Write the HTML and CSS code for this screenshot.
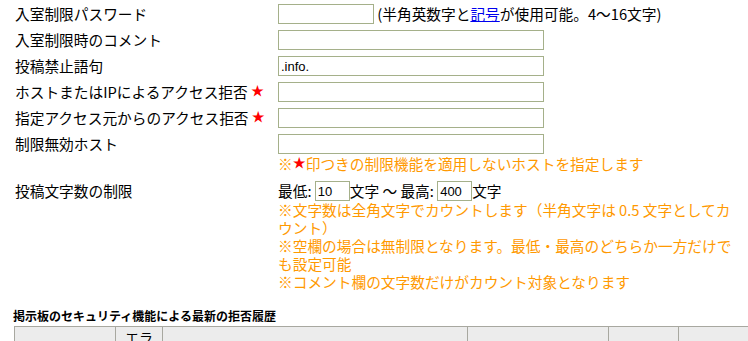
FILE: index.html
```html
<!DOCTYPE html>
<html lang="ja">

<head>
  <meta charset="UTF-8">
  <meta name="viewport" content="width=device-width, initial-scale=1.0">
  <title>セキュリティ設定</title>
  <link rel="stylesheet" href="styles.css">
</head>

<body>
  <div class="settings">
    <div class="label">入室制限パスワード</div>
    <div class="value">
      <input type="text" class="short"> (半角英数字と<a href="#">記号</a>が使用可能。4〜16文字)
    </div>

    <div class="label">入室制限時のコメント</div>
    <div class="value"><input type="text" class="long"></div>

    <div class="label">投稿禁止語句</div>
    <div class="value"><input type="text" class="long" value=".info."></div>

    <div class="label">ホストまたはIPによるアクセス拒否 <span class="star">★</span></div>
    <div class="value"><input type="text" class="long"></div>

    <div class="label">指定アクセス元からのアクセス拒否 <span class="star">★</span></div>
    <div class="value"><input type="text" class="long"></div>

    <div class="label">制限無効ホスト</div>
    <div class="value">
      <input type="text" class="long">
      <div class="note host-note">※<span class="star">★</span>印つきの制限機能を適用しないホストを指定します</div>
    </div>

    <div class="label">投稿文字数の制限</div>
    <div class="value">
      <div class="range">
        最低: <input type="text" class="num" value="10">文字 〜 最高: <input type="text" class="num" value="400">文字
      </div>
      <div class="note">※文字数は全角文字でカウントします（半角文字は 0.5 文字としてカウント）</div>
      <div class="note">※空欄の場合は無制限となります。最低・最高のどちらか一方だけでも設定可能</div>
      <div class="note">※コメント欄の文字数だけがカウント対象となります</div>
    </div>
  </div>

  <h2 class="history-title">掲示板のセキュリティ機能による最新の拒否履歴</h2>
  <table class="history">
    <tr>
      <th class="c1"></th>
      <th class="c2">エラー</th>
      <th class="c3"></th>
      <th class="c4"></th>
      <th class="c5"></th>
      <th class="c6"></th>
    </tr>
  </table>
</body>

</html>
```

FILE: styles.css
```css
html {
  overflow: hidden;
}

body {
  font-family: "Noto Sans CJK JP", "Liberation Sans", sans-serif;
  font-size: 14.7px;
  color: #000;
  background-color: #fff;
  margin: 0;
  padding: 4px 0 0 15px;
}

.settings {
  display: grid;
  grid-template-columns: 263px 462px;
  grid-auto-rows: min-content;
  row-gap: 6px;
}

.label {
  line-height: 20px;
  height: 20px;
  white-space: nowrap;
}

.value {
  line-height: 20px;
  min-height: 20px;
}

.star {
  color: #ff0000;
  font-size: 13px;
  line-height: 0;
  vertical-align: 3px;
}

input {
  font-family: "Liberation Sans", Arial, sans-serif;
  font-size: 13px;
  height: 20px;
  box-sizing: border-box;
  border: 1px solid #a5b08a;
  padding: 0 2px;
  margin: 0;
  vertical-align: top;
  background-color: #fff;
}

.value > input.long {
  display: block;
}

input.short {
  width: 96px;
}

input.long {
  width: 266px;
}

input.num {
  width: 35px;
}

a {
  color: #0000ee;
}

.note {
  color: #ff9900;
  line-height: 18px;
}

.host-note {
  margin-top: 1px;
  margin-bottom: 2px;
}

.range {
  line-height: 20px;
  height: 20px;
}

.history-title {
  font-size: 12px;
  font-weight: bold;
  margin: 17px 0 2px -2px;
  line-height: 16px;
}

.history {
  border-collapse: collapse;
  margin-left: -1px;
  width: 760px;
  table-layout: fixed;
}

.history th {
  background-color: #ececec;
  border: 1px solid #a8a8a0;
  font-size: 14px;
  font-weight: normal;
  padding: 2px 4px;
  height: 30px;
  line-height: 16px;
  vertical-align: top;
  text-align: center;
}

.history .c1 { width: 92px; }
.history .c2 { width: 38px; }
.history .c3 { width: 296px; }
.history .c4 { width: 132px; }
.history .c5 { width: 61px; }
```
